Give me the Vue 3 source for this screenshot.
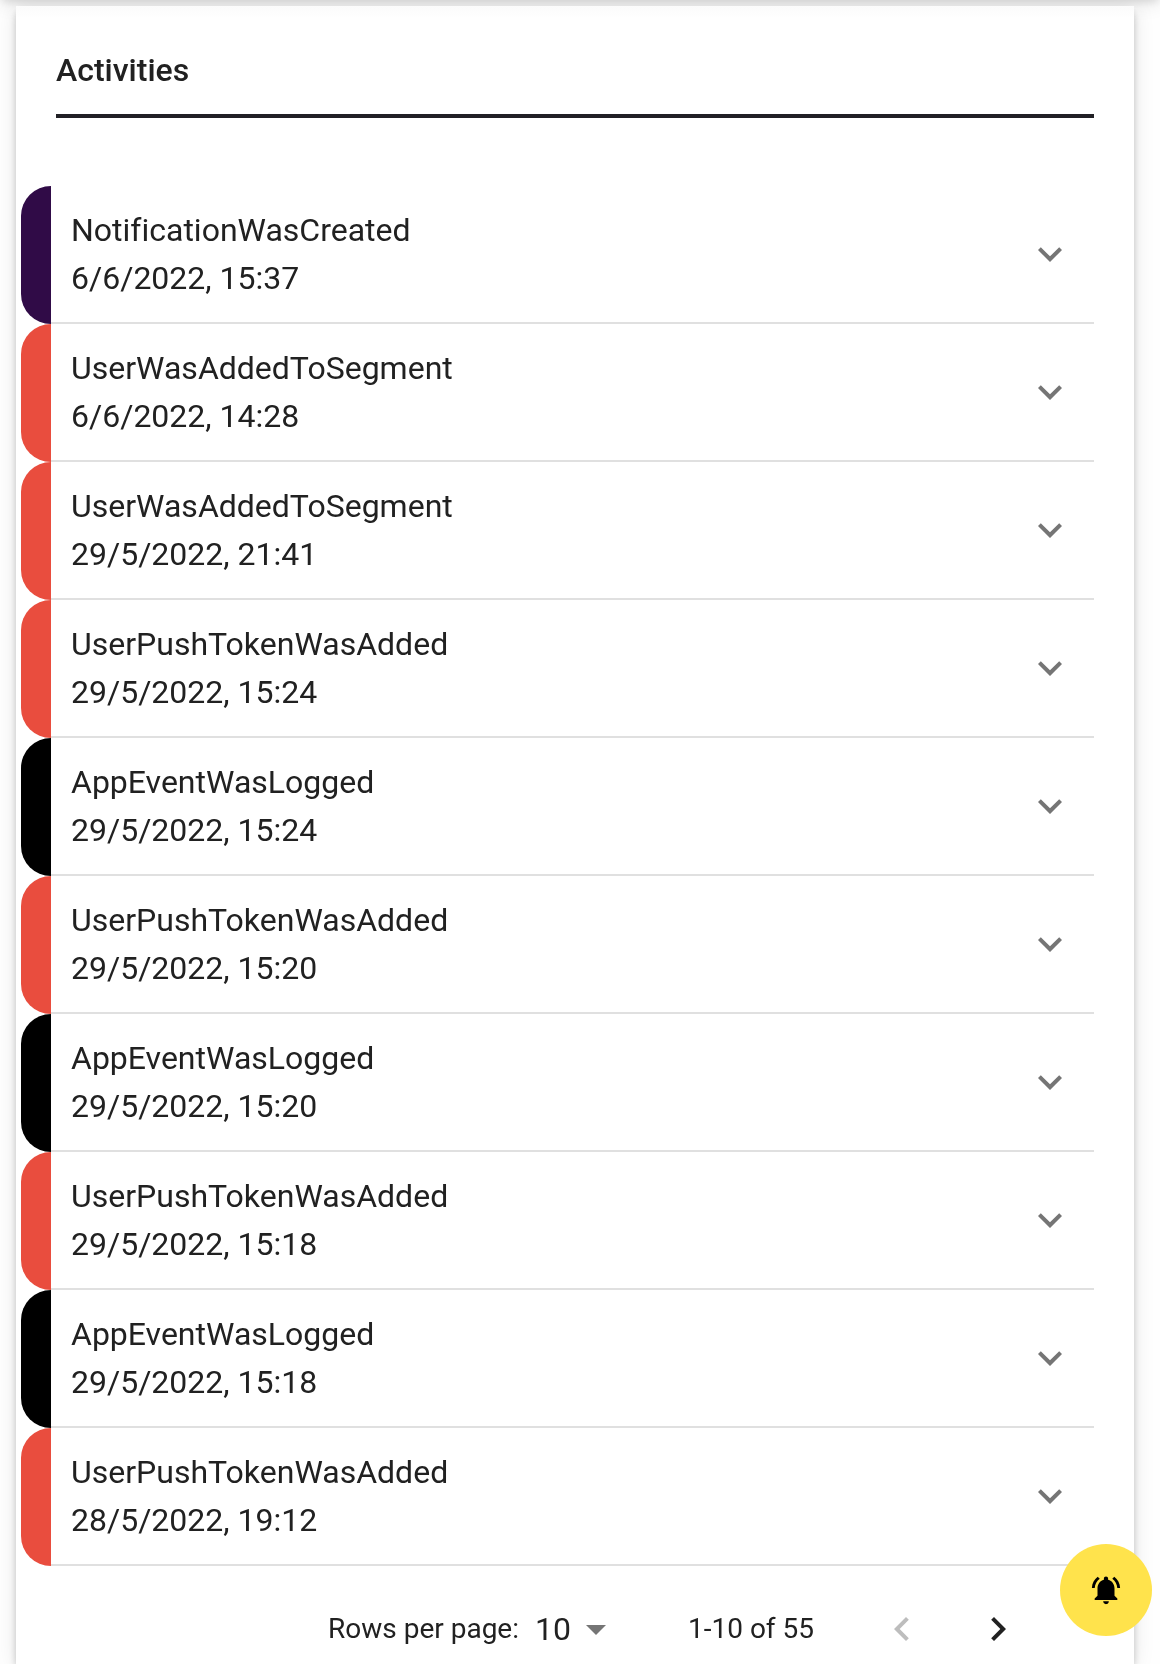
<script setup>
import { ref } from 'vue'

const rowsPerPage = ref(10)

const activities = [
  { name: 'NotificationWasCreated', date: '6/6/2022, 15:37', tone: 'purple' },
  { name: 'UserWasAddedToSegment', date: '6/6/2022, 14:28', tone: 'red' },
  { name: 'UserWasAddedToSegment', date: '29/5/2022, 21:41', tone: 'red' },
  { name: 'UserPushTokenWasAdded', date: '29/5/2022, 15:24', tone: 'red' },
  { name: 'AppEventWasLogged', date: '29/5/2022, 15:24', tone: 'black' },
  { name: 'UserPushTokenWasAdded', date: '29/5/2022, 15:20', tone: 'red' },
  { name: 'AppEventWasLogged', date: '29/5/2022, 15:20', tone: 'black' },
  { name: 'UserPushTokenWasAdded', date: '29/5/2022, 15:18', tone: 'red' },
  { name: 'AppEventWasLogged', date: '29/5/2022, 15:18', tone: 'black' },
  { name: 'UserPushTokenWasAdded', date: '28/5/2022, 19:12', tone: 'red' },
]
</script>

<template>
  <div class="page">
    <div class="bar-shadow"></div>
    <main class="card">
      <h2 class="title">Activities</h2>
      <ul class="list">
        <li v-for="(item, i) in activities" :key="i" class="item" :class="item.tone">
          <button type="button" class="row" aria-expanded="false">
            <span class="text">
              <span class="line">{{ item.name }}</span>
              <span class="line">{{ item.date }}</span>
            </span>
            <svg class="icon muted" viewBox="0 0 24 24" aria-hidden="true">
              <path d="M16.59 8.59L12 13.17 7.41 8.59 6 10l6 6 6-6z" />
            </svg>
          </button>
        </li>
      </ul>
      <div class="pagination">
        <label class="small" for="rows">Rows per page:</label>
        <span class="select-wrap">
          <select id="rows" v-model="rowsPerPage" class="select">
            <option :value="10">10</option>
            <option :value="25">25</option>
            <option :value="50">50</option>
          </select>
          <svg class="icon muted arrow" viewBox="0 0 24 24" aria-hidden="true">
            <path d="M7 10l5 5 5-5z" />
          </svg>
        </span>
        <span class="small">1-10 of 55</span>
        <div class="actions">
          <button type="button" class="nav" disabled aria-label="Previous page">
            <svg class="icon" viewBox="0 0 24 24" aria-hidden="true">
              <path d="M15.41 16.59L10.83 12l4.58-4.59L14 6l-6 6 6 6z" />
            </svg>
          </button>
          <button type="button" class="nav" aria-label="Next page">
            <svg class="icon" viewBox="0 0 24 24" aria-hidden="true">
              <path d="M8.59 16.59L13.17 12 8.59 7.41 10 6l6 6-6 6z" />
            </svg>
          </button>
        </div>
      </div>
    </main>
    <button type="button" class="fab" aria-label="Notifications">
      <svg viewBox="0 0 24 24" aria-hidden="true">
        <path d="M7.58 4.08L6.15 2.65C3.75 4.48 2.17 7.3 2.03 10.5h2c.15-2.65 1.51-4.97 3.55-6.42zm12.39 6.42h2c-.15-3.2-1.73-6.02-4.12-7.85l-1.42 1.43c2.02 1.45 3.39 3.77 3.54 6.42zM18 11c0-3.07-1.64-5.64-4.5-6.32V4c0-.83-.67-1.5-1.5-1.5s-1.5.67-1.5 1.5v.68C7.63 5.36 6 7.92 6 11v5l-2 2v1h16v-1l-2-2v-5zm-6 11c.14 0 .27-.01.4-.04.65-.14 1.18-.58 1.44-1.18.1-.24.15-.5.15-.78h-4c.01 1.1.9 2 2.01 2z" />
      </svg>
    </button>
  </div>
</template>

<style>
body {
  margin: 0;
  background: #fefefe;
}
</style>

<style scoped>
.page {
  box-sizing: border-box;
  min-height: 100vh;
  padding: 6px 26px 0 16px;
  display: flex;
  flex-direction: column;
  overflow: hidden;
  color: #212121;
  font-family: Roboto, "Liberation Sans", sans-serif;
  font-size: 32px;
  font-variant-ligatures: none;
  line-height: 48px;
}

/* Shadow cast by the app bar behind the scrolled card */
.bar-shadow {
  position: fixed;
  inset: -20px 0 auto;
  height: 20px;
  box-shadow: 0 4px 8px -2px rgba(0, 0, 0, 0.1), 0 2px 20px rgba(0, 0, 0, 0.12);
}

.card {
  position: relative;
  flex: 1;
  padding: 40px 40px 0;
  background: linear-gradient(#fbfbfb, #fff 12px);
  box-shadow: 0 4px 8px -2px rgba(0, 0, 0, 0.18), 0 8px 10px rgba(0, 0, 0, 0.1), 0 2px 20px rgba(0, 0, 0, 0.1);
}

.title {
  margin: 0 0 68px;
  padding-bottom: 20px;
  border-bottom: 4px solid #212025;
  font-size: 32px;
  font-weight: 500;
}

.list {
  margin: 0 0 0 -35px;
  padding: 0;
  list-style: none;
}

.item {
  display: flex;
}

.item::before {
  content: "";
  flex: none;
  width: 30px;
  border-radius: 30px 0 0 30px;
  background: var(--tone);
}

.purple {
  --tone: #300b47;
}

.red {
  --tone: #e94d3e;
}

.black {
  --tone: #000;
}

.row {
  flex: 1;
  display: flex;
  align-items: center;
  justify-content: space-between;
  padding: 20px;
  border: 0;
  border-bottom: 2px solid #e0e0e0;
  background: none;
  color: inherit;
  font: inherit;
  text-align: left;
  cursor: pointer;
}

.line {
  display: block;
}

.icon {
  display: block;
  width: 48px;
  height: 48px;
  fill: currentColor;
}

.muted {
  color: #757575;
}

.pagination {
  display: flex;
  align-items: center;
  justify-content: flex-end;
  height: 70px;
  padding: 28px 48px 0 0;
}

.small {
  font-size: 28px;
}

.select-wrap {
  position: relative;
  margin: 0 68px 0 16px;
}

.select {
  display: block;
  width: 85px;
  height: 48px;
  padding: 0;
  border: 0;
  background: none;
  appearance: none;
  color: inherit;
  font: inherit;
}

.arrow {
  position: absolute;
  top: 0;
  right: 0;
  pointer-events: none;
}

.actions {
  display: flex;
  margin-left: 40px;
}

.nav {
  padding: 0 24px;
  border: 0;
  background: none;
  color: #212121;
  cursor: pointer;
}

.nav:disabled {
  color: #bdbdbd;
  cursor: default;
}

.fab {
  position: fixed;
  right: 8px;
  bottom: 28px;
  z-index: 3;
  display: grid;
  place-items: center;
  width: 92px;
  height: 92px;
  padding: 0;
  border: 0;
  border-radius: 50%;
  background: #ffe34c;
  color: #000;
  cursor: pointer;
}

.fab svg {
  width: 34px;
  height: 34px;
  fill: currentColor;
}
</style>
